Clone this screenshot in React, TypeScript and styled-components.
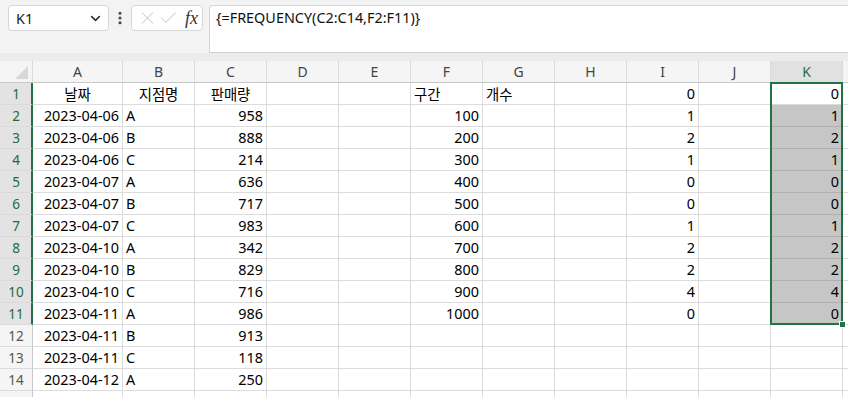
import styled, { createGlobalStyle } from 'styled-components';
import { ChevronDown, EllipsisVertical, X, Check } from 'lucide-react';

const GlobalStyle = createGlobalStyle`
  html, body {
    margin: 0;
    padding: 0;
    background: #f3f3f3;
  }
  * {
    box-sizing: border-box;
  }
`;

type Align = 'left' | 'center' | 'right';
type CellValue = { text: string; align: Align } | null;

const columns = ['A', 'B', 'C', 'D', 'E', 'F', 'G', 'H', 'I', 'J', 'K'];

const header = ['날짜', '지점명', '판매량'];
const sales: [string, string, number][] = [
  ['2023-04-06', 'A', 958],
  ['2023-04-06', 'B', 888],
  ['2023-04-06', 'C', 214],
  ['2023-04-07', 'A', 636],
  ['2023-04-07', 'B', 717],
  ['2023-04-07', 'C', 983],
  ['2023-04-10', 'A', 342],
  ['2023-04-10', 'B', 829],
  ['2023-04-10', 'C', 716],
  ['2023-04-11', 'A', 986],
  ['2023-04-11', 'B', 913],
  ['2023-04-11', 'C', 118],
  ['2023-04-12', 'A', 250],
];
const bins = [100, 200, 300, 400, 500, 600, 700, 800, 900, 1000];
const counts = [0, 1, 2, 1, 0, 0, 1, 2, 2, 4, 0];

const buildRow = (r: number): CellValue[] => {
  const row: CellValue[] = columns.map(() => null);
  if (r === 1) {
    header.forEach((h, i) => (row[i] = { text: h, align: 'center' }));
    row[5] = { text: '구간', align: 'left' };
    row[6] = { text: '개수', align: 'left' };
  } else if (r <= 14) {
    const [date, branch, qty] = sales[r - 2];
    row[0] = { text: date, align: 'right' };
    row[1] = { text: branch, align: 'left' };
    row[2] = { text: String(qty), align: 'right' };
    if (r <= 11) row[5] = { text: String(bins[r - 2]), align: 'right' };
  }
  if (r <= 11) {
    row[8] = { text: String(counts[r - 1]), align: 'right' };
    row[10] = { text: String(counts[r - 1]), align: 'right' };
  }
  return row;
};

// row 15 is only a sliver at the bottom edge, so its number is not shown
const rows = Array.from({ length: 15 }, (_, i) => i + 1);

const App = () => (
  <Page>
    <GlobalStyle />
    <FormulaBar>
      <NameBox>
        <span>K1</span>
        <ChevronDown size={15} strokeWidth={2.6} color="#333" />
      </NameBox>
      <Dots>
        <EllipsisVertical size={16} strokeWidth={2.6} color="#444" />
      </Dots>
      <ActionBox>
        <X size={22} strokeWidth={1.1} color="#bdbdbd" />
        <Check size={22} strokeWidth={1.1} color="#bdbdbd" />
        <Fx>fx</Fx>
      </ActionBox>
      <FormulaInput>{'{=FREQUENCY(C2:C14,F2:F11)}'}</FormulaInput>
    </FormulaBar>
    <Divider />
    <GridWrap>
      <Grid>
        <Corner>
          <CornerTriangle />
        </Corner>
        {columns.map((c) => (
          <ColHeader key={c} $active={c === 'K'}>
            {c}
          </ColHeader>
        ))}
        <ColHeader $active={false} />
        {rows.map((r) => (
          <Row key={r} r={r} />
        ))}
      </Grid>
      <Selection>
        <FillHandle />
      </Selection>
    </GridWrap>
  </Page>
);

const Row = ({ r }: { r: number }) => {
  const cells = buildRow(r);
  const selectedRow = r <= 11;
  return (
    <>
      <RowHeader $active={selectedRow}>{r <= 14 ? r : ''}</RowHeader>
      {cells.map((cell, i) => (
        <Cell
          key={i}
          $align={cell ? cell.align : 'left'}
          $shaded={i === 10 && r >= 2 && r <= 11}
        >
          {cell ? cell.text : ''}
        </Cell>
      ))}
      <Cell $align="left" $shaded={false} />
    </>
  );
};

const Page = styled.div`
  width: 848px;
  height: 397px;
  overflow: hidden;
  background: #f3f3f3;
  font-family: 'Noto Sans', 'Noto Sans CJK KR', sans-serif;
  color: #000;
`;

const FormulaBar = styled.div`
  display: flex;
  align-items: flex-start;
  height: 53px;
  padding: 5px 0 0 8px;
`;

const NameBox = styled.div`
  display: flex;
  align-items: center;
  justify-content: space-between;
  width: 101px;
  height: 26px;
  padding: 0 5px 0 7px;
  background: #fff;
  border: 1px solid #d6d6d6;
  border-radius: 4px;
  font-size: 14.4px;
  color: #222;
`;

const Dots = styled.div`
  display: flex;
  align-items: center;
  justify-content: center;
  width: 22px;
  height: 26px;
`;

const ActionBox = styled.div`
  display: flex;
  align-items: center;
  gap: 0;
  width: 72px;
  height: 26px;
  padding: 0 4px 0 5px;
  background: #fff;
  border: 1px solid #d6d6d6;
  border-radius: 4px;
`;

const Fx = styled.span`
  margin-left: 6px;
  font-family: 'Liberation Serif', serif;
  font-style: italic;
  font-size: 18px;
  color: #333;
  line-height: 1;
`;

const FormulaInput = styled.div`
  flex: 1;
  height: 48px;
  margin-left: 6px;
  padding: 3px 6px;
  background: #fff;
  border: 1px solid #d6d6d6;
  border-right: none;
  border-bottom-color: #cfcfcf;
  border-radius: 4px 0 0 0;
  font-size: 14.4px;
  line-height: 18px;
  color: #111;
`;

const Divider = styled.div`
  height: 8px;
  background: #ececec;
`;

const GridWrap = styled.div`
  position: relative;
  background: #fff;
`;

const Grid = styled.div`
  display: grid;
  grid-template-columns: 33px 90px repeat(10, 72px) 1fr;
  grid-auto-rows: 22px;
`;

const Corner = styled.div`
  position: relative;
  background: #f5f5f5;
  border-right: 1px solid #dadada;
  border-bottom: 1px solid #c8c8c8;
`;

const CornerTriangle = styled.div`
  position: absolute;
  right: 4px;
  bottom: 3px;
  width: 0;
  height: 0;
  border-left: 13px solid transparent;
  border-bottom: 13px solid #d8d8d8;
`;

const ColHeader = styled.div<{ $active: boolean }>`
  display: flex;
  align-items: center;
  justify-content: center;
  background: ${(p) => (p.$active ? '#e1e1e1' : '#f5f5f5')};
  border-right: 1px solid #dadada;
  border-bottom: 1px solid #c8c8c8;
  font-size: 14px;
  color: ${(p) => (p.$active ? '#1e6b41' : '#444')};
`;

const RowHeader = styled.div<{ $active: boolean }>`
  display: flex;
  align-items: center;
  justify-content: center;
  background: ${(p) => (p.$active ? '#e3e3e3' : '#f5f5f5')};
  border-right: ${(p) => (p.$active ? '2px solid #217346' : '1px solid #c8c8c8')};
  border-bottom: 1px solid #dadada;
  font-size: 13.5px;
  padding-left: ${(p) => (p.$active ? '1px' : '0')};
  color: ${(p) => (p.$active ? '#1e6b41' : '#555')};
`;

const Cell = styled.div<{ $align: Align; $shaded: boolean }>`
  display: flex;
  align-items: center;
  justify-content: ${(p) =>
    p.$align === 'right' ? 'flex-end' : p.$align === 'center' ? 'center' : 'flex-start'};
  padding: 0 3px;
  background: ${(p) => (p.$shaded ? '#c6c6c6' : '#fff')};
  border-right: 1px solid #dcdcdc;
  border-bottom: 1px solid ${(p) => (p.$shaded ? '#b0b0b0' : '#dcdcdc')};
  font-size: 14.4px;
  white-space: nowrap;
  overflow: hidden;
`;

const Selection = styled.div`
  position: absolute;
  left: 770px;
  top: 21px;
  width: 73px;
  height: 243px;
  border: 2px solid #217346;
  pointer-events: none;
`;

const FillHandle = styled.div`
  position: absolute;
  right: -5px;
  bottom: -5px;
  width: 7px;
  height: 7px;
  background: #217346;
  border: 1px solid #fff;
`;

export default App;
